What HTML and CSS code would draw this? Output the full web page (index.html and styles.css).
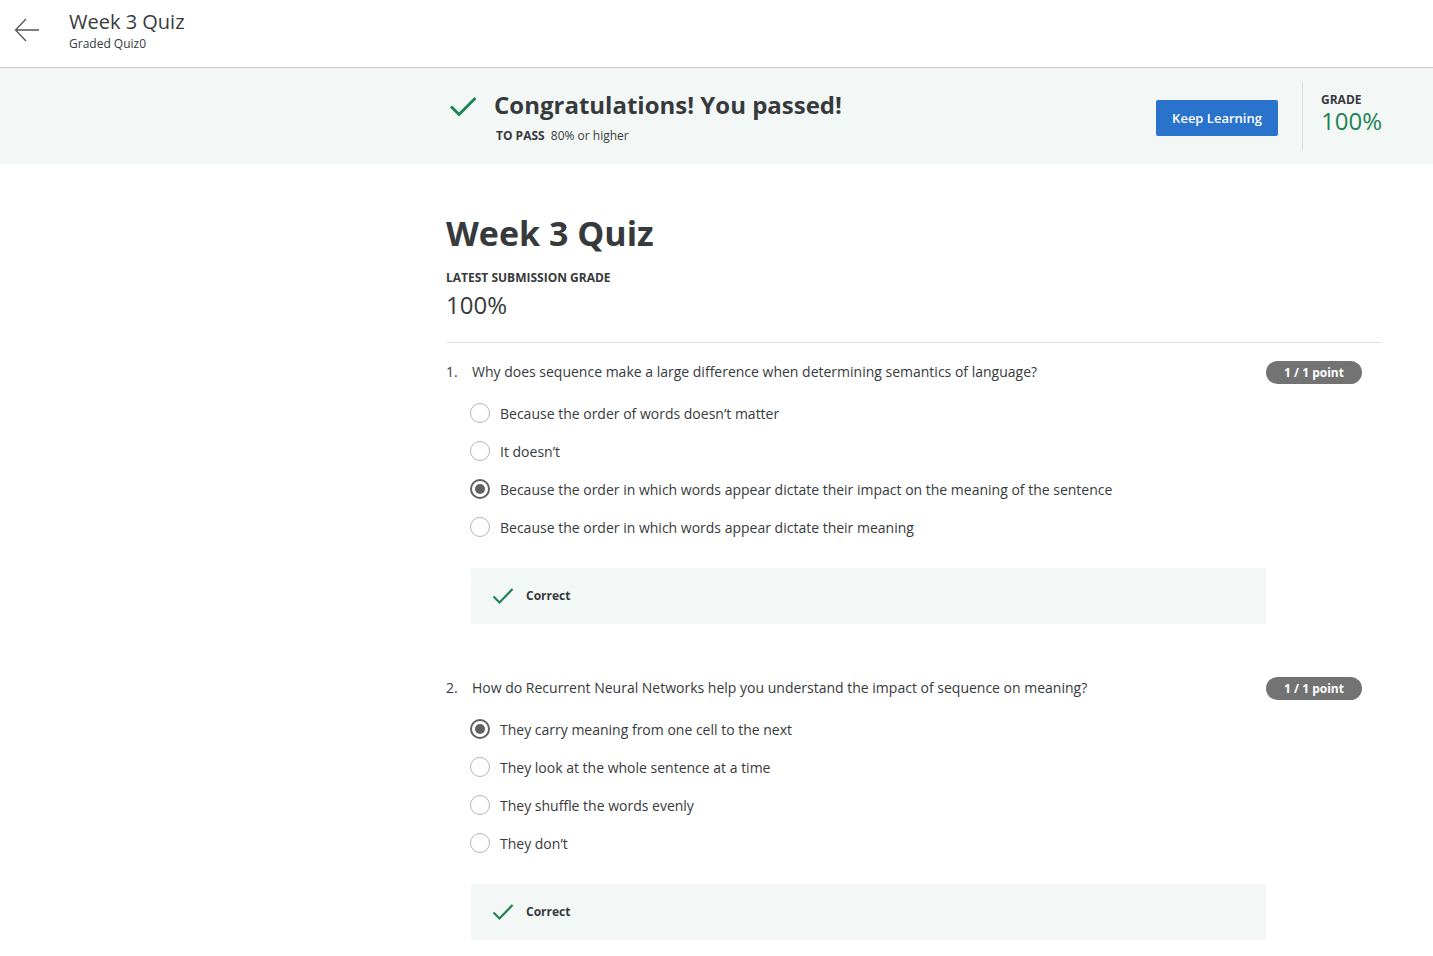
FILE: index.html
```html
<!DOCTYPE html>
<html>
<head>
<meta charset="utf-8">
<link rel="stylesheet" href="styles.css">
</head>
<body>
<header class="topbar">
  <button class="back" aria-label="Back">
    <svg width="26" height="26" viewBox="0 0 26 26"><path d="M25 12H2M12 1L1.5 12 12 23" fill="none" stroke="#555" stroke-width="1.3"/></svg>
  </button>
  <div class="top-titles">
    <div class="top-title">Week 3 Quiz</div>
    <div class="top-sub">Graded Quiz0</div>
  </div>
</header>

<section class="banner">
  <div class="banner-inner">
    <svg class="banner-check" width="28" height="22" viewBox="0 0 28 22"><path d="M2 11.5l8 8L26.5 3" fill="none" stroke="#1f8354" stroke-width="3"/></svg>
    <div class="banner-text">
      <div class="banner-title">Congratulations! You passed!</div>
      <div class="banner-pass"><b>TO PASS</b> 80% or higher</div>
    </div>
    <button class="keep">Keep Learning</button>
    <div class="grade-box">
      <div class="grade-label">GRADE</div>
      <div class="grade-val">100%</div>
    </div>
  </div>
</section>

<main class="main">
  <h1 class="quiz-title">Week 3 Quiz</h1>
  <div class="latest-label">LATEST SUBMISSION GRADE</div>
  <div class="latest-val">100%</div>
  <hr class="divider">

  <div class="question">
    <div class="q-head">
      <span class="q-num">1.</span>
      <span class="q-text">Why does sequence make a large difference when determining semantics of language?</span>
      <span class="badge">1 / 1 point</span>
    </div>
    <ul class="options">
      <li><span class="radio"></span>Because the order of words doesn’t matter</li>
      <li><span class="radio"></span>It doesn’t</li>
      <li><span class="radio checked"></span>Because the order in which words appear dictate their impact on the meaning of the sentence</li>
      <li><span class="radio"></span>Because the order in which words appear dictate their meaning</li>
    </ul>
    <div class="feedback">
      <svg width="22" height="18" viewBox="0 0 22 18"><path d="M1.5 9.5l6 6L20.5 2" fill="none" stroke="#1f8354" stroke-width="2.2"/></svg>
      <span>Correct</span>
    </div>
  </div>

  <div class="question">
    <div class="q-head">
      <span class="q-num">2.</span>
      <span class="q-text">How do Recurrent Neural Networks help you understand the impact of sequence on meaning?</span>
      <span class="badge">1 / 1 point</span>
    </div>
    <ul class="options">
      <li><span class="radio checked"></span>They carry meaning from one cell to the next</li>
      <li><span class="radio"></span>They look at the whole sentence at a time</li>
      <li><span class="radio"></span>They shuffle the words evenly</li>
      <li><span class="radio"></span>They don’t</li>
    </ul>
    <div class="feedback">
      <svg width="22" height="18" viewBox="0 0 22 18"><path d="M1.5 9.5l6 6L20.5 2" fill="none" stroke="#1f8354" stroke-width="2.2"/></svg>
      <span>Correct</span>
    </div>
  </div>
</main>
</body>
</html>
```

FILE: styles.css
```css
* { box-sizing: border-box; }
html, body { margin: 0; padding: 0; }
body {
  font-family: "Open Sans", "Noto Sans", sans-serif;
  color: #373a3c;
  background: #fff;
  width: 1433px;
  overflow: hidden;
}

.topbar {
  height: 68px;
  border-bottom: 1px solid #c6c9cb;
  display: flex;
  align-items: flex-start;
}
.back {
  border: 0;
  background: none;
  padding: 0;
  margin: 18px 0 0 14px;
  width: 26px;
  height: 26px;
  display: flex;
}
.top-titles { margin: 8px 0 0 29px; }
.top-title { font-size: 20px; line-height: 28px; color: #373a3c; }
.top-sub { font-size: 12px; line-height: 16px; color: #373a3c; margin-top: 0; }

.banner {
  background: #f3f8f7;
  height: 96px;
}
.banner-inner {
  margin-left: 446px;
  width: 936px;
  height: 96px;
  display: flex;
  align-items: flex-start;
}
.banner-check { margin: 27px 0 0 3px; flex: none; }
.banner-text { margin: 21px 0 0 17px; flex: 1; }
.banner-title { font-size: 24px; font-weight: 700; line-height: 32px; color: #373a3c; }
.banner-pass { font-size: 12px; line-height: 16px; margin-top: 7px; padding-left: 2px; }
.banner-pass b { font-weight: 700; margin-right: 3px; }
.keep {
  margin-top: 32px;
  width: 122px;
  height: 36px;
  border: 0;
  border-radius: 2px;
  background: #2a73cc;
  color: #fff;
  font-family: inherit;
  font-size: 13px;
  font-weight: 600;
  padding: 0;
}
.grade-box {
  margin: 14px 0 0 24px;
  height: 68px;
  border-left: 1px solid #dadcdd;
  padding: 10px 0 0 18px;
  width: 80px;
}
.grade-label { font-size: 12px; font-weight: 700; line-height: 16px; }
.grade-val { font-size: 24px; line-height: 26px; color: #1f8354; }

.main {
  margin-left: 446px;
  width: 936px;
  padding-top: 44px;
}
.quiz-title {
  font-size: 34px;
  font-weight: 700;
  line-height: 50px;
  margin: 0;
  color: #373a3c;
}
.latest-label { font-size: 12px; font-weight: 700; line-height: 16px; margin-top: 12px; }
.latest-val { font-size: 24px; line-height: 32px; margin-top: 3px; }
.divider {
  border: 0;
  border-top: 1px solid #e1e1e1;
  margin: 21px 0 0;
}

.question { padding-top: 17px; margin-bottom: 35px; }
.q-head {
  display: flex;
  align-items: center;
  font-size: 14px;
  line-height: 24px;
  padding-right: 20px;
}
.q-num { width: 26px; flex: none; }
.q-text { flex: 1; }
.badge {
  background: #737373;
  color: #fff;
  font-size: 12px;
  font-weight: 700;
  line-height: 23px;
  height: 23px;
  width: 96px;
  text-align: center;
  border-radius: 12px;
}
.options {
  list-style: none;
  margin: 10px 0 0;
  padding: 0 0 0 24px;
}
.options li {
  display: flex;
  align-items: center;
  height: 38px;
  font-size: 14px;
}
.radio {
  width: 20px;
  height: 20px;
  border: 1.5px solid #b5b5b5;
  border-radius: 50%;
  margin-right: 10px;
  flex: none;
  display: flex;
  align-items: center;
  justify-content: center;
}
.radio.checked { border: 2px solid #606060; }
.radio.checked::after {
  content: "";
  width: 10px;
  height: 10px;
  border-radius: 50%;
  background: #606060;
}
.feedback {
  margin: 22px 116px 0 25px;
  height: 56px;
  background: #f3f8f7;
  display: flex;
  align-items: center;
  padding-left: 21px;
  padding-bottom: 1px;
  font-size: 12px;
  font-weight: 700;
}
.feedback svg { margin-right: 12px; }
```
